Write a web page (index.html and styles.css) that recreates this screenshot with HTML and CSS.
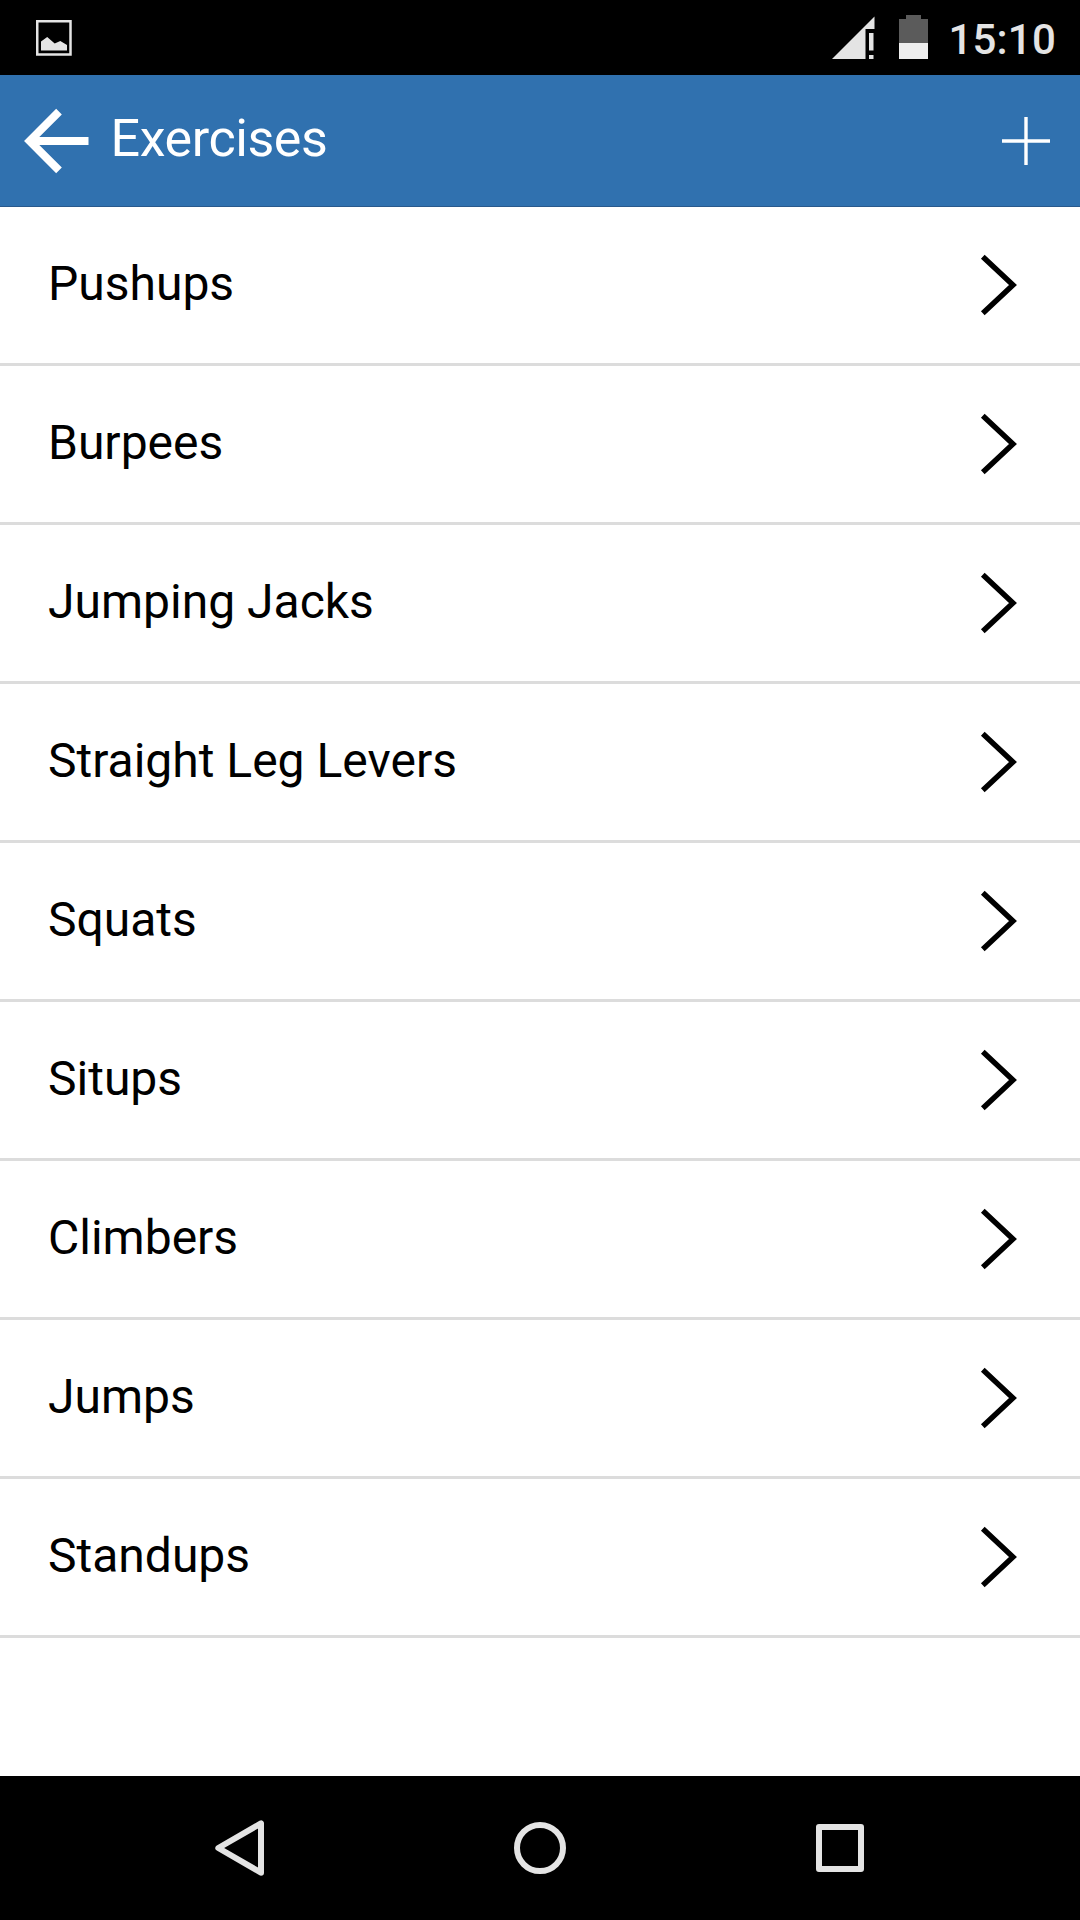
FILE: index.html
```html
<!DOCTYPE html>
<html lang="en">
<head>
<meta charset="utf-8">
<title>Exercises</title>
<link rel="stylesheet" href="styles.css">
</head>
<body>
<div class="screen">
  <div class="status-bar">
    <svg class="picture-icon" viewBox="0 0 36 36">
      <rect x="1.25" y="1.25" width="33.25" height="33.25" fill="none" stroke="#e4e4e4" stroke-width="2.5"/>
      <path d="M5 30.5V21.5L11.2 17L18.7 23.5L24.3 21L31 25V30.5Z" fill="#e4e4e4"/>
    </svg>
    <div class="status-right">
      <svg class="signal-icon" viewBox="0 0 43 43">
        <path d="M42.5 0.5V13H33.5V43H0Z" fill="#e4e4e4"/>
        <path d="M37 17H41.5V34.5H37ZM37 39H41.5V43H37Z" fill="#e4e4e4"/>
      </svg>
      <svg class="battery-icon" viewBox="0 0 29 44">
        <path d="M7 0H22V4H29V28H0V4H7Z" fill="#5b5b5b"/>
        <rect y="28" width="29" height="16" fill="#eeeeee"/>
      </svg>
      <span class="clock">15:10</span>
    </div>
  </div>
  <header class="app-bar">
    <svg class="back-icon" viewBox="0 0 66 66">
      <path d="M35 3.7L5.7 33L35 62.3M6 33H64.5" fill="none" stroke="#fff" stroke-width="8"/>
    </svg>
    <h1 class="title">Exercises</h1>
    <svg class="add-icon" viewBox="0 0 48 48">
      <path d="M24 0V48M0 24H48" fill="none" stroke="#fff" stroke-width="3.4"/>
    </svg>
  </header>
  <ul class="list">
    <li class="row"><span class="name">Pushups</span><svg class="chevron" viewBox="0 0 38 62"><path d="M2.8 2.7L33 31L2.8 59.3"/></svg></li>
    <li class="row"><span class="name">Burpees</span><svg class="chevron" viewBox="0 0 38 62"><path d="M2.8 2.7L33 31L2.8 59.3"/></svg></li>
    <li class="row"><span class="name">Jumping Jacks</span><svg class="chevron" viewBox="0 0 38 62"><path d="M2.8 2.7L33 31L2.8 59.3"/></svg></li>
    <li class="row"><span class="name">Straight Leg Levers</span><svg class="chevron" viewBox="0 0 38 62"><path d="M2.8 2.7L33 31L2.8 59.3"/></svg></li>
    <li class="row"><span class="name">Squats</span><svg class="chevron" viewBox="0 0 38 62"><path d="M2.8 2.7L33 31L2.8 59.3"/></svg></li>
    <li class="row"><span class="name">Situps</span><svg class="chevron" viewBox="0 0 38 62"><path d="M2.8 2.7L33 31L2.8 59.3"/></svg></li>
    <li class="row"><span class="name">Climbers</span><svg class="chevron" viewBox="0 0 38 62"><path d="M2.8 2.7L33 31L2.8 59.3"/></svg></li>
    <li class="row"><span class="name">Jumps</span><svg class="chevron" viewBox="0 0 38 62"><path d="M2.8 2.7L33 31L2.8 59.3"/></svg></li>
    <li class="row"><span class="name">Standups</span><svg class="chevron" viewBox="0 0 38 62"><path d="M2.8 2.7L33 31L2.8 59.3"/></svg></li>
  </ul>
  <nav class="nav-bar">
    <svg class="nav-icon" viewBox="0 0 60 60"><path d="M8.3 30L51 5.3V54.7Z"/></svg>
    <svg class="nav-icon" viewBox="0 0 60 60"><circle cx="30" cy="30" r="23"/></svg>
    <svg class="nav-icon" viewBox="0 0 60 60"><path d="M9 9H51V51H9Z"/></svg>
  </nav>
</div>
</body>
</html>
```
FILE: styles.css
```css
* {
  box-sizing: border-box;
}

body {
  margin: 0;
  background: #fff;
  font-family: Roboto, "Liberation Sans", sans-serif;
}

svg {
  display: block;
  flex: none;
}

.screen {
  display: flex;
  flex-direction: column;
  width: 1080px;
  height: 1920px;
}

.status-bar {
  display: flex;
  justify-content: space-between;
  height: 75px;
  padding: 0 24px 0 36px;
  background: #000;
}

.picture-icon {
  width: 36px;
  height: 36px;
  margin-top: 20px;
}

.status-right {
  display: flex;
  align-items: flex-start;
}

.signal-icon {
  width: 43px;
  height: 43px;
  margin: 16px 24.5px 0 0;
}

.battery-icon {
  width: 29px;
  height: 44px;
  margin: 15px 20.2px 0 0;
}

.clock {
  margin-top: 15px;
  color: #e4e4e4;
  font-size: 42px;
  font-weight: 500;
  letter-spacing: 0.2px;
  line-height: 50px;
}

.app-bar {
  display: flex;
  align-items: center;
  height: 132px;
  padding: 0 30px 0 24px;
  border-bottom: 1px solid #29598c;
  background: #3071af;
}

.back-icon {
  width: 66px;
  height: 66px;
}

.title {
  flex: 1;
  margin: 0;
  padding: 0 0 4px 20.5px;
  color: #fff;
  font-size: 52px;
  font-weight: 400;
  letter-spacing: -0.42px;
  line-height: 60px;
}

.add-icon {
  width: 48px;
  height: 48px;
}

.list {
  flex: 1;
  margin: 0;
  padding: 0;
  list-style: none;
}

.row {
  display: flex;
  align-items: center;
  justify-content: space-between;
  height: 159px;
  padding: 0 62px 0 48px;
  border-bottom: 3px solid #dcdcdc;
}

.name {
  padding-bottom: 2px;
  color: #000;
  font-size: 48px;
  line-height: 56px;
}

.chevron {
  width: 38px;
  height: 62px;
  fill: none;
  stroke: #000;
  stroke-width: 5.4;
}

.nav-bar {
  display: flex;
  align-items: center;
  justify-content: space-between;
  height: 144px;
  padding: 0 210px;
  background: #000;
}

.nav-icon {
  width: 60px;
  height: 60px;
  fill: none;
  stroke: #e4e4e4;
  stroke-width: 6;
  stroke-linejoin: round;
}
```
